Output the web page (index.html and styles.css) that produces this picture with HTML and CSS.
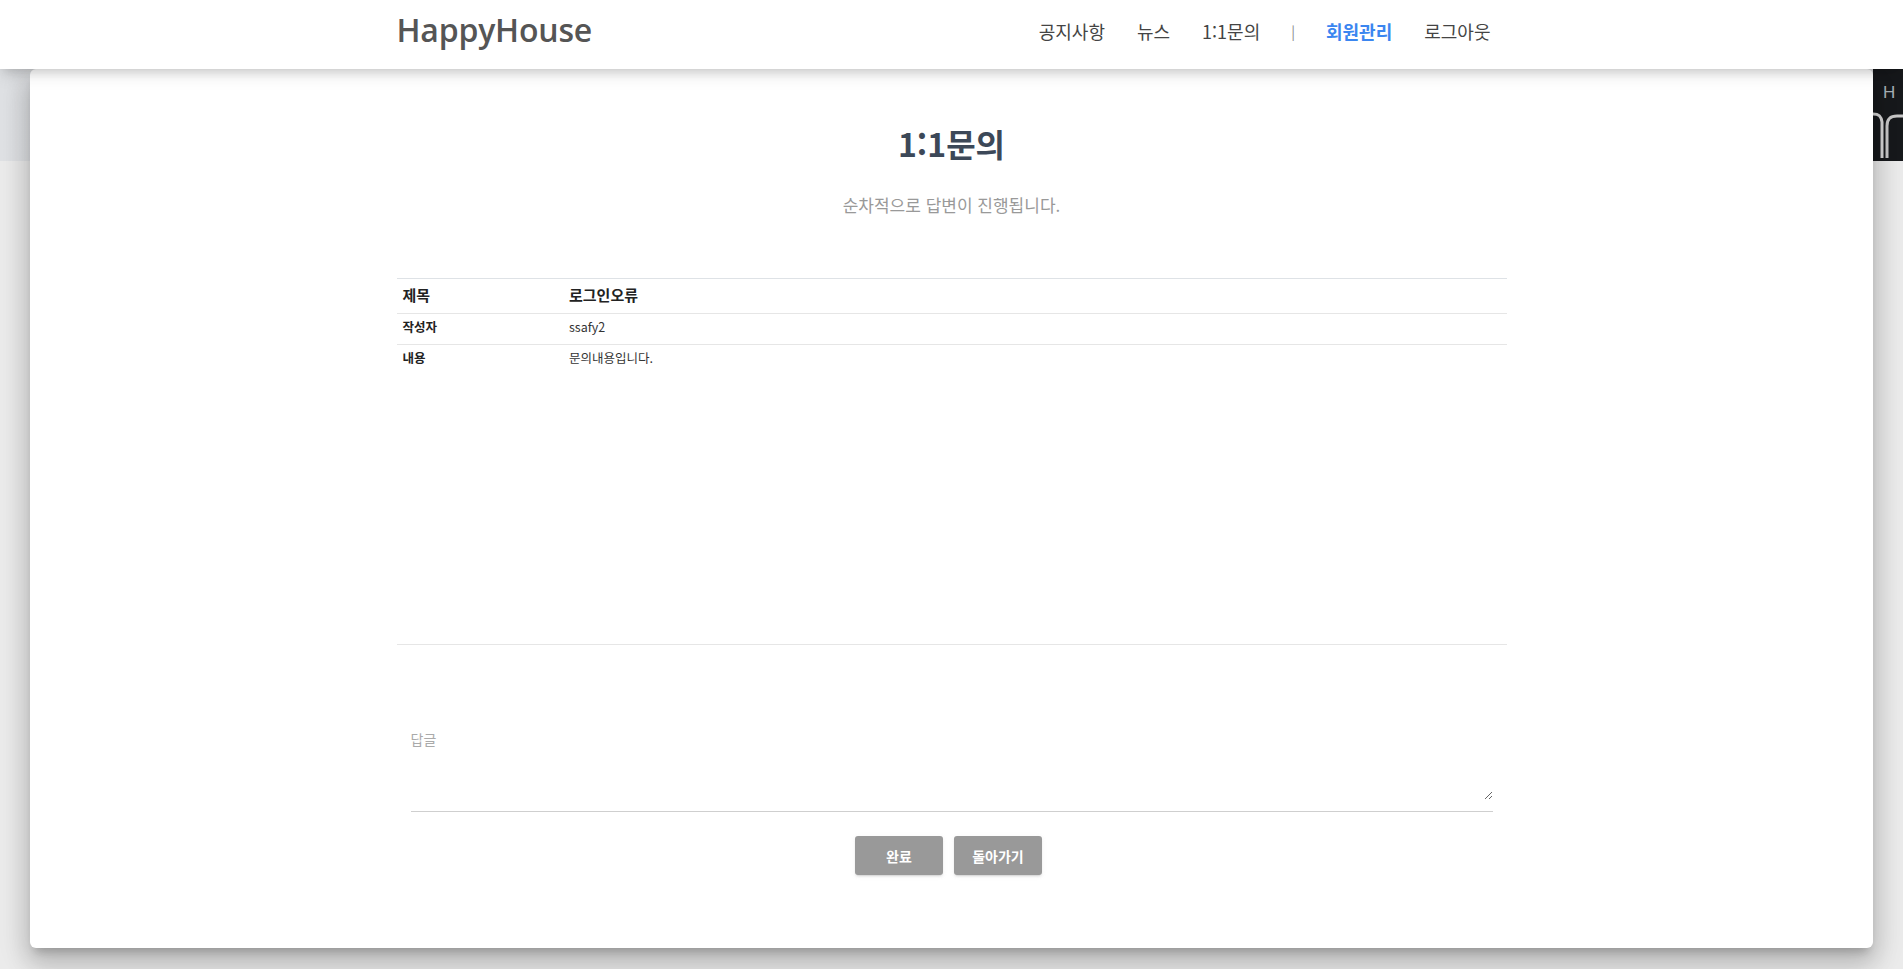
FILE: index.html
```html
<!DOCTYPE html>
<html lang="ko">
<head>
<meta charset="utf-8">
<title>HappyHouse - 1:1문의</title>
<link rel="stylesheet" href="styles.css">
</head>
<body>
<header class="navbar">
  <div class="container nav-inner">
    <a class="brand" href="#">HappyHouse</a>
    <nav class="menu">
      <a href="#">공지사항</a>
      <a href="#">뉴스</a>
      <a href="#">1:1문의</a>
      <span class="sep">|</span>
      <a href="#" class="active">회원관리</a>
      <a href="#">로그아웃</a>
    </nav>
  </div>
</header>
<div class="hero">
  <div class="hero-img">
    <span class="hero-letter">H</span>
    <svg class="hero-shape" width="30" height="50" viewBox="0 0 30 50" aria-hidden="true">
      <path d="M0 6 C6 6 8 8 9 14 L9 50" fill="none" stroke="#d8d8d8" stroke-width="3"/>
      <path d="M14 50 L14 18 C14 11 17 8 24 8 L30 8" fill="none" stroke="#c9c9c9" stroke-width="3"/>
    </svg>
  </div>
</div>
<main class="card">
  <div class="container">
    <h2 class="title">1:1문의</h2>
    <p class="subtitle">순차적으로 답변이 진행됩니다.</p>
    <table class="detail">
      <tr class="row-head">
        <th>제목</th>
        <td>로그인오류</td>
      </tr>
      <tr>
        <th>작성자</th>
        <td>ssafy2</td>
      </tr>
      <tr class="row-body">
        <th>내용</th>
        <td>문의내용입니다.</td>
      </tr>
    </table>
    <div class="reply">
      <textarea placeholder="답글"></textarea>
    </div>
    <div class="actions">
      <button type="button" class="btn">완료</button>
      <button type="button" class="btn">돌아가기</button>
    </div>
  </div>
</main>
</body>
</html>
```
FILE: styles.css
```css
* { box-sizing: border-box; }

html, body {
  margin: 0;
  padding: 0;
}

body {
  background: #ebebeb;
  font-family: "Noto Sans CJK KR", "Noto Sans", sans-serif;
  color: #333;
  min-height: 969px;
}

a { text-decoration: none; color: inherit; }

.container {
  width: 1140px;
  margin: 0 auto;
  padding: 0 15px;
}

/* navbar */
.navbar {
  position: relative;
  z-index: 10;
  height: 69px;
  background: #fff;
  box-shadow: 0 4px 18px 0 rgba(0,0,0,.12), 0 7px 10px -5px rgba(0,0,0,.15);
}

.nav-inner {
  height: 69px;
  display: flex;
  align-items: center;
  justify-content: space-between;
}

.brand {
  font-family: "Open Sans", "Noto Sans CJK KR", sans-serif;
  font-weight: 600;
  font-size: 32px;
  color: #555;
  letter-spacing: -0.2px;
  margin-top: -11px;
}

.menu {
  display: flex;
  align-items: center;
  font-size: 18px;
  color: #444;
  margin-top: -8px;
}

.menu a,
.menu .sep {
  padding: 0 16px;
}

.menu .sep {
  color: #888;
  font-size: 14px;
  padding: 0 15px;
}

.menu a.active {
  color: #3b86f0;
  font-weight: 700;
}

/* hero behind card */
.hero {
  height: 92px;
  display: flex;
  justify-content: flex-end;
  background: linear-gradient(to right, #dfe1e4, #e3e5e8 30%, #e6e7e9);
}

.hero-img {
  width: 30px;
  height: 92px;
  background: #17191c;
  display: flex;
  flex-direction: column;
  align-items: flex-start;
  overflow: hidden;
}

.hero-letter {
  font-family: "Liberation Sans", sans-serif;
  font-size: 17px;
  color: #a9b3ba;
  margin: 15px 0 0 10px;
  line-height: 18px;
}

.hero-shape {
  margin-top: 6px;
}

/* card */
.card {
  position: relative;
  z-index: 3;
  margin: -92px 30px 0;
  background: #fff;
  border-radius: 6px;
  padding: 50px 0 73px;
  box-shadow: 0 16px 24px 2px rgba(0,0,0,.14), 0 6px 30px 5px rgba(0,0,0,.12), 0 8px 10px -5px rgba(0,0,0,.2);
}

.title {
  margin: 0;
  text-align: center;
  font-size: 32px;
  line-height: 48px;
  font-weight: 700;
  color: #3c4858;
}

.subtitle {
  margin: 26px 0 0;
  text-align: center;
  font-size: 17px;
  line-height: 24px;
  color: #999;
}

.detail {
  width: 100%;
  margin-top: 61px;
  border-collapse: collapse;
  border-top: 1px solid #dee2e6;
}

.detail th,
.detail td {
  text-align: left;
  vertical-align: top;
  padding: 6px 6px 10px;
  font-size: 12px;
  line-height: 14px;
  border-bottom: 1px solid #e6e6e6;
  color: #333;
}

.detail th {
  width: 15%;
  font-weight: 700;
  font-size: 12.5px;
  color: #222;
}

.detail td {
  font-size: 12.5px;
}

.detail .row-head th,
.detail .row-head td {
  font-size: 15px;
  font-weight: 700;
  line-height: 17px;
  padding: 7px 6px 10px;
  color: #222;
}

.detail .row-body th,
.detail .row-body td {
  height: 300px;
  padding-top: 6px;
}

.reply {
  margin: 84px 14px 0 14px;
  border-bottom: 1px solid #cfcfcf;
  padding-bottom: 11px;
}

.reply textarea {
  display: block;
  width: 100%;
  height: 71px;
  border: 0;
  padding: 0;
  outline: none;
  font-family: "Noto Sans CJK KR", sans-serif;
  font-size: 14px;
  line-height: 20px;
  color: #333;
  background: transparent;
}

.reply textarea::placeholder {
  color: #aaa;
}

.actions {
  display: flex;
  justify-content: center;
  gap: 11px;
  margin-top: 24px;
  padding-right: 6px;
}

.btn {
  width: 88px;
  height: 39px;
  border: 0;
  border-radius: 3px;
  background: #999;
  color: #fff;
  font-family: "Noto Sans CJK KR", sans-serif;
  font-size: 14px;
  font-weight: 700;
  box-shadow: 0 2px 2px 0 rgba(153,153,153,.14), 0 3px 1px -2px rgba(153,153,153,.2), 0 1px 5px 0 rgba(153,153,153,.12);
  cursor: pointer;
}
```
